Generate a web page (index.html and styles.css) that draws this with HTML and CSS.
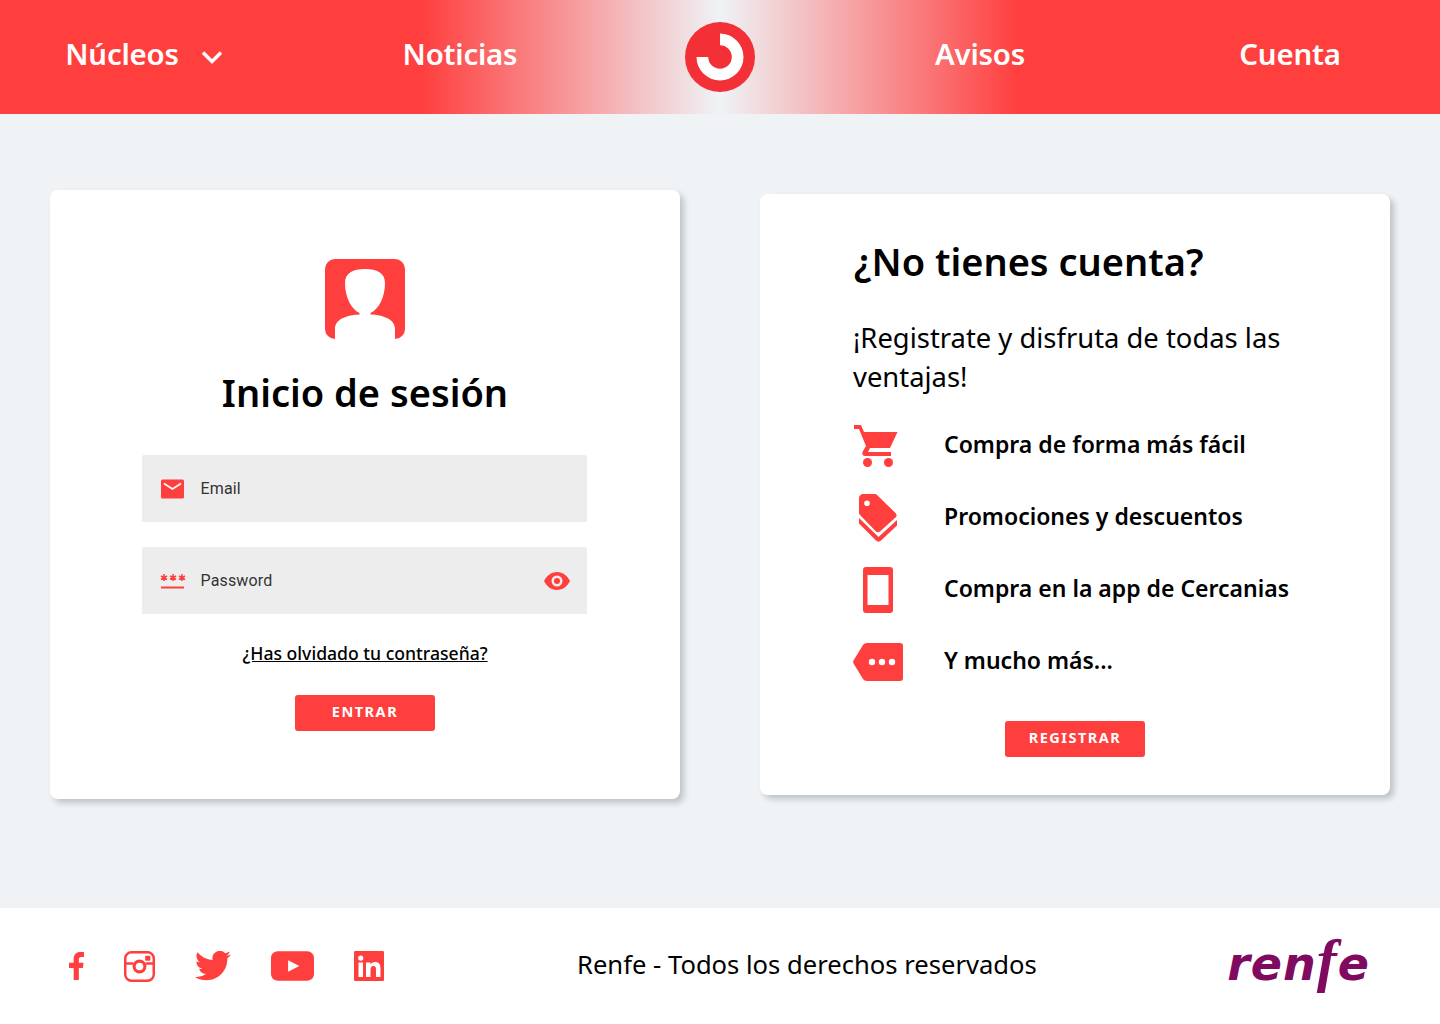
FILE: index.html
```html
<!DOCTYPE html>
<html lang="es">
<head>
    <meta charset="UTF-8">
    <title>Renfe Cercanias - Inicio de sesión</title>
    <link rel="stylesheet" href="styles.css">
</head>
<body>
    <header class="topbar">
        <a class="nav-link nav-nucleos">Núcleos
            <svg class="chevron" viewBox="0 0 22 14" width="22" height="14"><path d="M2 2.500 11 11.500 20 2.500" fill="none" stroke="#fff" stroke-width="3.400"/></svg>
        </a>
        <a class="nav-link">Noticias</a>
        <svg class="brand" viewBox="0 0 70 70" width="70" height="70">
            <circle cx="35" cy="35" r="35" fill="#f23035"/>
            <path d="M35 11.500A23.500 23.500 0 1 1 11.500 35H23.200A11.800 11.800 0 1 0 35 23.200Z" fill="#fff"/>
        </svg>
        <a class="nav-link">Avisos</a>
        <a class="nav-link">Cuenta</a>
    </header>

    <main class="content">
        <section class="card login">
            <svg class="avatar" viewBox="0 0 80 80" width="80" height="80">
                <path d="M10 0H70A10 10 0 0 1 80 10V70A10 10 0 0 1 70 80V70C70 60 58 56 45.500 55.500V54C54 50 60 38 60 24C60 14 52 10 40 10C28 10 20 14 20 24C20 38 26 50 34.500 54V55.500C22 56 10 60 10 70V80A10 10 0 0 1 0 70V10A10 10 0 0 1 10 0Z" fill="#ff3e3e"/>
            </svg>
            <h1 class="login-title">Inicio de sesión</h1>
            <div class="field">
                <svg class="field-icon" viewBox="0 0 24 20" width="24" height="20"><rect y="0.500" width="23" height="19" rx="1.500" fill="#ff3e3e"/><path d="M3 4.500 11.500 10 20 4.500" fill="none" stroke="#fff" stroke-width="1.800"/></svg>
                <span class="field-label">Email</span>
            </div>
            <div class="field">
                <svg class="field-icon" viewBox="0 0 26 16" width="26" height="16"><g fill="none" stroke="#ff3e3e" stroke-width="1.500"><path d="M4 1V8M1 3 7 6.500M7 3 1 6.500M13 1V8M10 3 16 6.500M16 3 10 6.500M22 1V8M19 3 25 6.500M25 3 19 6.500"/></g><rect x="1" y="13.500" width="23" height="2" fill="#ff3e3e"/></svg>
                <span class="field-label">Password</span>
                <svg class="eye" viewBox="0 0 26 18" width="26" height="18"><path fill-rule="evenodd" d="M13 0C19 0 23.500 4 26 9C23.500 14 19 18 13 18C7 18 2.500 14 0 9C2.500 4 7 0 13 0ZM13 3.500A5.500 5.500 0 1 0 13 14.500A5.500 5.500 0 1 0 13 3.500ZM13 6A3 3 0 1 1 13 12A3 3 0 1 1 13 6Z" fill="#ff3e3e"/></svg>
            </div>
            <a class="forgot">¿Has olvidado tu contraseña?</a>
            <a class="btn">ENTRAR</a>
        </section>

        <section class="card signup">
            <h2 class="signup-title">¿No tienes cuenta?</h2>
            <p class="signup-text">¡Registrate y disfruta de todas las ventajas!</p>
            <ul class="perks">
                <li class="perk">
                    <span class="perk-icon">
                        <svg class="icon-cart" viewBox="0 0 44 44" width="44" height="44"><path d="M0 1H7L10 8H43.500L36 24H16L14 28H37V32H11C8 32 8 29 9 27L12 22 5 5H0Z" fill="#ff3e3e"/><circle cx="13.500" cy="38.500" r="4.500" fill="#ff3e3e"/><circle cx="34.500" cy="38.500" r="4.500" fill="#ff3e3e"/></svg>
                    </span>
                    Compra de forma más fácil
                </li>
                <li class="perk">
                    <span class="perk-icon">
                        <svg class="icon-tag" viewBox="0 0 38 48" width="38" height="48"><path fill-rule="evenodd" d="M4 0H17L36.500 19C38 20.500 38 22 36.500 23.500L21 37.500C20 38.500 18 38.500 17 37.500L1 21C0 20 0 19.500 0 18V4C0 2 2 0 4 0ZM8 6.500A2.800 2.800 0 1 0 8 12.100A2.800 2.800 0 1 0 8 6.500Z" fill="#ff3e3e"/><path d="M0 24 19.500 43 38 26V31.500L22 46.500C20.500 48 18.500 48 17 46.500L0 29.500Z" fill="#ff3e3e"/></svg>
                    </span>
                    Promociones y descuentos
                </li>
                <li class="perk">
                    <span class="perk-icon">
                        <svg class="icon-phone" viewBox="0 0 30 46" width="30" height="46"><path fill-rule="evenodd" d="M3 0H27C29 0 30 1 30 3V43C30 45 29 46 27 46H3C1 46 0 45 0 43V3C0 1 1 0 3 0ZM4.500 8V38H25.500V8Z" fill="#ff3e3e"/></svg>
                    </span>
                    Compra en la app de Cercanias
                </li>
                <li class="perk">
                    <span class="perk-icon">
                        <svg viewBox="0 0 50 38" width="50" height="38"><path fill-rule="evenodd" d="M14 0H47C49 0 50 1 50 3V35C50 37 49 38 47 38H14C12 38 11 37 10 36L0.500 20.500C0 19.500 0 18.500 0.500 17.500L10 2C11 1 12 0 14 0Z" fill="#ff3e3e"/><circle cx="19" cy="19" r="3.200" fill="#fff"/><circle cx="29" cy="19" r="3.200" fill="#fff"/><circle cx="39" cy="19" r="3.200" fill="#fff"/></svg>
                    </span>
                    Y mucho más...
                </li>
            </ul>
            <a class="btn">REGISTRAR</a>
        </section>
    </main>

    <footer class="footer">
        <nav class="socials">
            <svg class="facebook" viewBox="0 0 16 30" width="15" height="30"><path d="M5 30V17H0V11.500H5V7.500C5 2.500 8 0 12 0H16V5.500H13C11 5.500 10.500 6.500 10.500 8V11.500H15.500L14.800 17H10.500V30Z" fill="#ff3e3e"/></svg>
            <svg class="instagram" viewBox="0 0 30 30" width="31" height="31"><rect x="1.200" y="1.200" width="27.600" height="27.600" rx="6" fill="none" stroke="#ff3e3e" stroke-width="2.400"/><path d="M1.500 12H9M21 12H28.500" stroke="#ff3e3e" stroke-width="2.400"/><circle cx="15" cy="15" r="5.200" fill="none" stroke="#ff3e3e" stroke-width="3"/><rect x="20.500" y="4.500" width="5" height="5" rx="1" fill="#ff3e3e"/></svg>
            <svg class="twitter" viewBox="0 2.500 24 19.500" width="36" height="30"><path d="M23.953 4.570a10 10 0 0 1-2.825.775 4.958 4.958 0 0 0 2.163-2.723c-.951.555-2.005.959-3.127 1.184a4.920 4.920 0 0 0-8.384 4.482C7.690 8.095 4.067 6.130 1.640 3.162a4.822 4.822 0 0 0-.666 2.475c0 1.710.870 3.213 2.188 4.096a4.904 4.904 0 0 1-2.228-.616v.060a4.923 4.923 0 0 0 3.946 4.827 4.996 4.996 0 0 1-2.212.085 4.936 4.936 0 0 0 4.604 3.417 9.867 9.867 0 0 1-6.102 2.105c-.390 0-.779-.023-1.170-.067a13.995 13.995 0 0 0 7.557 2.209c9.053 0 13.998-7.496 13.998-13.985 0-.210 0-.420-.015-.630A9.935 9.935 0 0 0 24 4.590z" fill="#ff3e3e"/></svg>
            <svg class="youtube" viewBox="0 0 44 30" width="43" height="30"><path fill-rule="evenodd" d="M7 0H37C41 0 44 3 44 7V23C44 27 41 30 37 30H7C3 30 0 27 0 23V7C0 3 3 0 7 0ZM17.500 9V21L29 15Z" fill="#ff3e3e"/></svg>
            <svg class="linkedin" viewBox="0 0 30 30" width="30" height="30"><path fill-rule="evenodd" d="M1.500 0H28.500C29.500 0 30 .5 30 1.500V28.500C30 29.500 29.500 30 28.500 30H1.500C.5 30 0 29.500 0 28.500V1.500C0 .5 .5 0 1.500 0ZM4.500 11.500V26H9V11.500ZM6.750 4.500A2.600 2.600 0 1 0 6.750 9.700A2.600 2.600 0 1 0 6.750 4.500ZM12 11.500V26H16.500V18.500C16.500 16.500 17.500 15 19.500 15C21.500 15 22 16.500 22 18.500V26H26.500V17.500C26.500 13 24.500 11 21 11C19 11 17.200 12 16.400 13.300V11.500Z" fill="#ff3e3e"/></svg>
        </nav>
        <p class="rights">Renfe - Todos los derechos reservados</p>
        <span class="renfe-logo">ren<span class="renfe-f">f</span>e</span>
    </footer>
</body>
</html>
```

FILE: styles.css
```css
* { box-sizing: border-box; }
body {
    margin: 0;
    font-family: "Noto Sans", "Open Sans", sans-serif;
    background-color: #eff3f6;
    color: #000;
}
svg { display: block; }
ul, h1, h2, p { margin: 0; padding: 0; }

.topbar {
    height: 114px;
    display: grid;
    grid-template-columns: 288px 344px 176px 344px 276px;
    align-items: center;
    background: linear-gradient(90deg, #ff3e3e 29.2%, #eff3f6 50%, #ff3e3e 70.8%);
}
.nav-link {
    padding-bottom: 7px;
    font-size: 29.4px;
    font-weight: 600;
    color: #fff;
    text-align: center;
    letter-spacing: -0.2px;
}
.nav-nucleos {
    display: flex;
    align-items: center;
    justify-content: center;
    gap: 22px;
}
.chevron { margin-top: 7px; }
.brand { justify-self: center; }

.content {
    height: 794px;
    padding: 76px 50px 0;
    display: flex;
    align-items: flex-start;
    gap: 80px;
}
.card {
    width: 630px;
    background-color: #fff;
    border-radius: 8px;
    box-shadow: 4px 4px 6px rgba(0, 0, 0, 0.2);
}
.login {
    height: 609px;
    padding-top: 69px;
    display: flex;
    flex-direction: column;
    align-items: center;
}
.login-title {
    margin-top: 23px;
    font-size: 38px;
    line-height: 60px;
    font-weight: 600;
}
.field {
    width: 445px;
    height: 67px;
    margin: 25px 1px 0 0;
    padding: 0 17px 0 18px;
    display: flex;
    align-items: center;
    background-color: #ededed;
    border-radius: 2px 2px 0 0;
}
.login-title + .field { margin-top: 33px; }
.field-icon { width: 26px; }
.field-label {
    margin-left: 14.5px;
    font-family: Roboto, sans-serif;
    font-size: 16px;
    letter-spacing: 0.15px;
    color: #333;
}
.eye { margin-left: auto; }
.forgot {
    margin-top: 27px;
    font-size: 17.6px;
    line-height: 24px;
    font-weight: 500;
    color: #000;
    text-decoration: underline;
}
.btn {
    width: 140px;
    height: 36px;
    padding-bottom: 5px;
    display: flex;
    align-items: center;
    justify-content: center;
    background-color: #ff3e3e;
    border-radius: 3px;
    color: #fff;
    font-size: 14.5px;
    font-weight: 700;
    letter-spacing: 1.5px;
}
.login .btn { margin-top: 30px; }

.signup {
    height: 601px;
    margin-top: 4px;
    padding: 39px 60px 0 93px;
}
.signup-title {
    padding-left: 1px;
    font-size: 38px;
    line-height: 56px;
    font-weight: 600;
}
.signup-text {
    margin-top: 29px;
    font-size: 27.4px;
    line-height: 39px;
}
.perks {
    margin-top: 12px;
    list-style: none;
}
.perk {
    height: 72px;
    display: flex;
    align-items: center;
    font-size: 23px;
    font-weight: 600;
}
.perk-icon {
    width: 91px;
    padding-top: 3px;
    display: flex;
}
.icon-cart { margin-left: 1px; }
.icon-tag { margin-left: 6px; }
.icon-phone { margin-left: 10px; }
.signup .btn { margin: 25px 0 0 152px; }

.footer {
    height: 116px;
    padding: 0 70px 0 69px;
    display: flex;
    align-items: center;
    background-color: #fff;
}
.socials {
    display: flex;
    align-items: center;
    gap: 40px;
}
.rights {
    margin: 0 0 4px 193px;
    font-size: 25.6px;
}
.renfe-logo {
    margin-left: auto;
    padding-bottom: 4px;
    font-family: "DejaVu Sans", sans-serif;
    font-size: 46px;
    font-weight: 700;
    font-style: italic;
    color: #7f0a5f;
    letter-spacing: 1px;
}
.renfe-f {
    font-family: "Liberation Serif", serif;
    font-size: 60px;
    line-height: 0;
}
```
